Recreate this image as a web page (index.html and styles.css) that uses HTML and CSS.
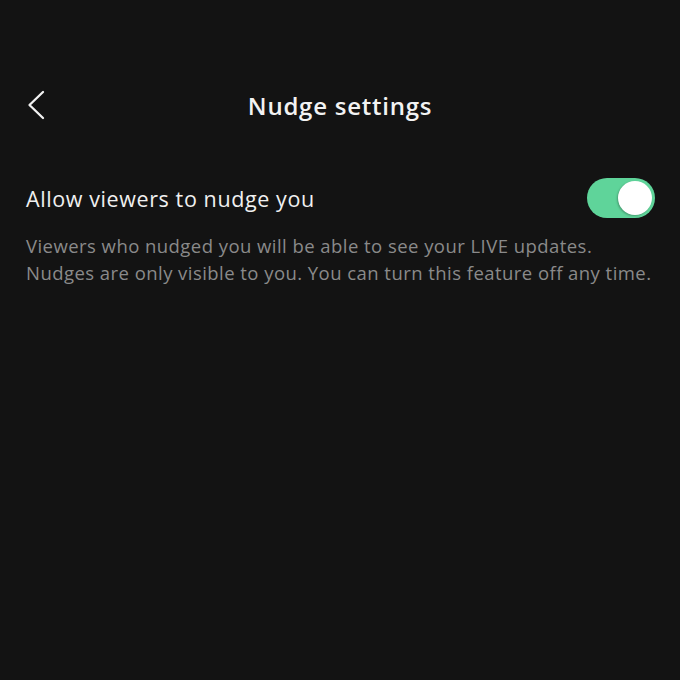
FILE: index.html
```html
<!DOCTYPE html>
<html lang="en">
<head>
    <meta charset="UTF-8">
    <meta name="viewport" content="width=device-width, initial-scale=1.0">
    <title>Nudge settings</title>
    <link rel="stylesheet" href="styles.css">
</head>
<body>
    <div class="header">
        <button class="back" aria-label="Back">
            <svg width="20" height="30" viewBox="0 0 20 30">
                <path d="M17 2 L3.5 15 L17 28" fill="none" stroke="#f2f2f2" stroke-width="2.3" stroke-linecap="round" stroke-linejoin="round"/>
            </svg>
        </button>
        <h1>Nudge settings</h1>
    </div>

    <div class="setting">
        <div class="row">
            <span class="label">Allow viewers to nudge you</span>
            <div class="toggle on"><div class="knob"></div></div>
        </div>
        <p class="desc">Viewers who nudged you will be able to see your LIVE updates.<br>Nudges are only visible to you. You can turn this feature off any time.</p>
    </div>
</body>
</html>
```

FILE: styles.css
```css
html, body {
    margin: 0;
    background-color: #131313;
}
body {
    font-family: "Open Sans", Lato, sans-serif;
    color: #f0f0f0;
    width: 680px;
    height: 680px;
}
.header {
    position: relative;
    display: flex;
    align-items: center;
    justify-content: center;
    height: 50px;
    margin-top: 80px;
}
.header h1 {
    margin: 0;
    font-size: 24px;
    font-weight: 600;
    letter-spacing: 0.75px;
    color: #f2f2f2;
}
.back {
    position: absolute;
    left: 26px;
    top: 10px;
    padding: 0;
    background: none;
    border: none;
    display: flex;
}
.setting {
    padding: 48px 25px 0 26px;
}
.row {
    display: flex;
    align-items: center;
    justify-content: space-between;
}
.label {
    font-size: 21.5px;
    letter-spacing: 0.6px;
    color: #f0f0f0;
}
.toggle {
    width: 68px;
    height: 40px;
    border-radius: 20px;
    background-color: #5fd49a;
    position: relative;
}
.knob {
    position: absolute;
    top: 3px;
    right: 3px;
    width: 34px;
    height: 34px;
    border-radius: 50%;
    background-color: #fff;
    box-shadow: -1px 1px 2px rgba(0, 0, 0, 0.25);
}
.desc {
    margin: 14px 0 0;
    font-size: 18.5px;
    line-height: 27px;
    letter-spacing: 0.45px;
    white-space: nowrap;
    color: #8a8a8a;
}
```
